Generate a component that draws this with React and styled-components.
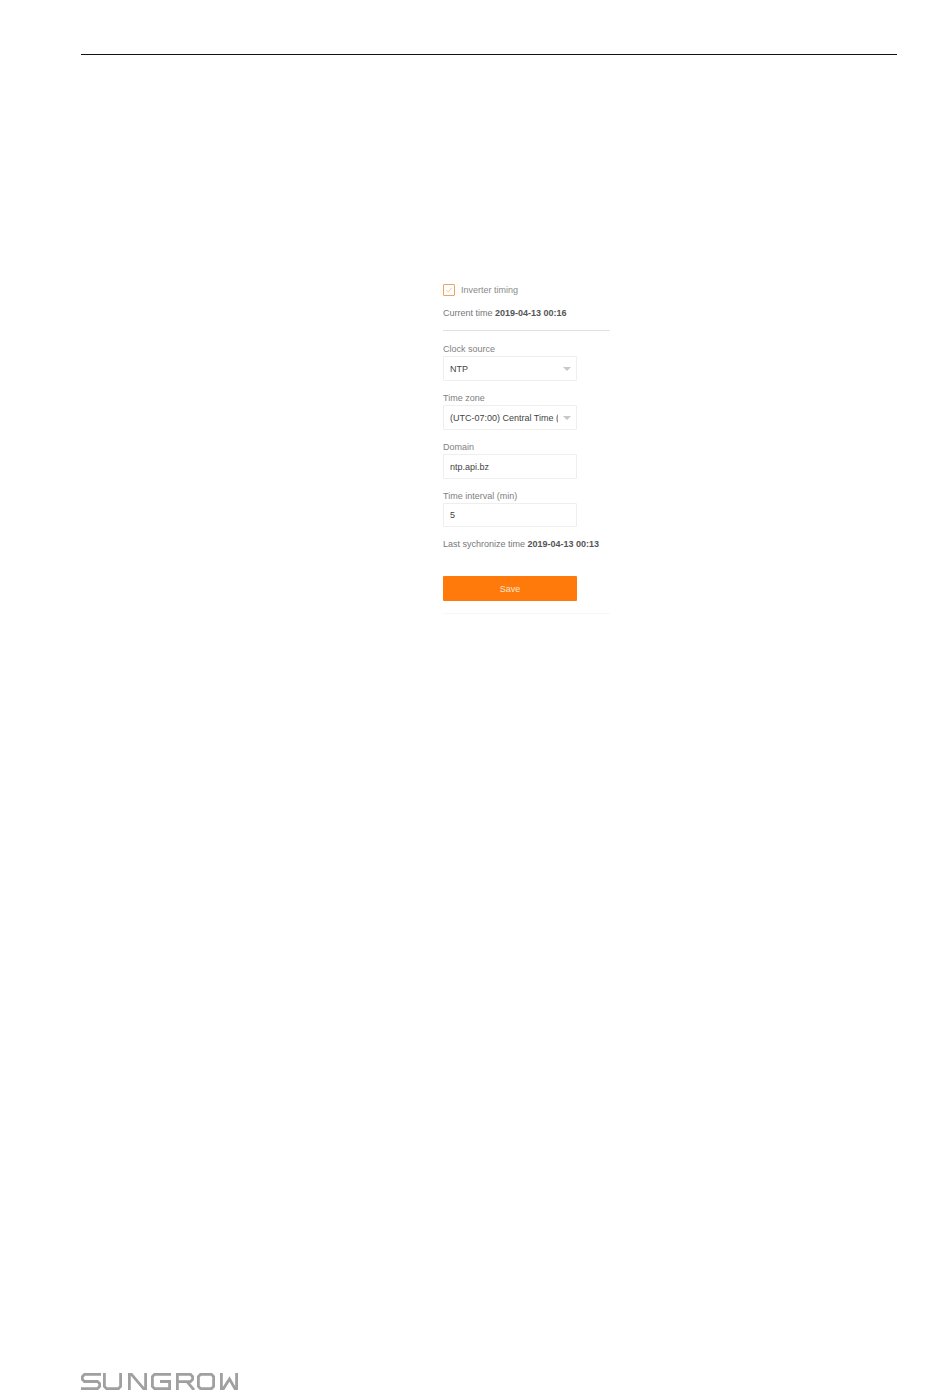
import React from 'react'
import styled, { createGlobalStyle } from 'styled-components'

const GlobalStyle = createGlobalStyle`
  html, body {
    margin: 0;
    padding: 0;
    background: #fff;
  }
`

const Page = styled.div`
  width: 950px;
  height: 1395px;
  box-sizing: border-box;
  padding: 54px 53px 5px 81px;
  display: flex;
  flex-direction: column;
  justify-content: space-between;
  overflow: hidden;
  font-family: "Liberation Sans", Arial, sans-serif;
`

const TopRule = styled.div`
  height: 1px;
  background: #111;
`

const Form = styled.div`
  width: 167px;
  margin: 228px 0 0 362px;
  display: flex;
  flex-direction: column;
  flex: 1;
`

const CheckRow = styled.label`
  display: flex;
  align-items: center;
  gap: 6px;
  height: 14px;
  font-size: 9px;
  color: #8a8a8a;
`

const CheckBox = styled.span`
  width: 10px;
  height: 10px;
  border: 1px solid #f0a35c;
  border-radius: 1px;
  display: flex;
  align-items: center;
  justify-content: center;
`

const InfoLine = styled.div`
  font-size: 9px;
  line-height: 12px;
  color: #777;
  margin-top: ${p => p.$top}px;

  b {
    color: #555;
  }
`

const Divider = styled.div`
  height: 1px;
  background: #e2e2e2;
  margin-top: 11px;
`

const FieldLabel = styled.div`
  font-size: 9px;
  line-height: 11px;
  color: #808080;
  margin-top: ${p => p.$top || 12}px;
`

const Control = styled.div`
  width: 134px;
  height: ${p => p.$height || 25}px;
  box-sizing: border-box;
  margin-top: 1px;
  padding: 0 5px 0 6px;
  border: 1px solid #eeeeee;
  border-radius: 1px;
  display: flex;
  align-items: center;
  justify-content: space-between;
  font-size: 9px;
  color: #444;
  background: #fff;
`

const ControlText = styled.span`
  white-space: nowrap;
  overflow: hidden;
  width: 108px;
`

const Caret = styled.span`
  width: 0;
  height: 0;
  border-left: 4.5px solid transparent;
  border-right: 4.5px solid transparent;
  border-top: 4px solid #c8c8c8;
`

const SaveButton = styled.button`
  width: 134px;
  height: 25px;
  margin-top: 26px;
  padding: 0;
  border: none;
  border-radius: 1px;
  background: #ff7a0a;
  color: #f7e6d2;
  font-family: inherit;
  font-size: 9px;
`

const FormEnd = styled.div`
  height: 1px;
  background: #f7f7f7;
  margin-top: 12px;
`

const Logo = styled.svg`
  display: block;
  width: 157px;
  height: 17px;
  flex-shrink: 0;
`

const Field = ({ label, value, select, top, height }) => (
  <>
    <FieldLabel $top={top}>{label}</FieldLabel>
    <Control $height={height}>
      <ControlText>{value}</ControlText>
      {select && <Caret />}
    </Control>
  </>
)

const App = () => (
  <Page>
    <GlobalStyle />
    <TopRule />
    <Form>
      <CheckRow>
        <CheckBox>
          <svg width="8" height="8" viewBox="0 0 8 8" fill="none">
            <path d="M1.2 4.2 L3.2 6 L6.8 1.8" stroke="#f3c9a3" strokeWidth="1" />
          </svg>
        </CheckBox>
        Inverter timing
      </CheckRow>
      <InfoLine $top={10}>Current time <b>2019-04-13 00:16</b></InfoLine>
      <Divider />
      <Field label="Clock source" value="NTP" select top={13} />
      <Field label="Time zone" value="(UTC-07:00) Central Time (US & Canada)" select />
      <Field label="Domain" value="ntp.api.bz" />
      <Field label="Time interval (min)" value="5" height={24} />
      <InfoLine $top={11}>Last sychronize time <b>2019-04-13 00:13</b></InfoLine>
      <SaveButton>Save</SaveButton>
      <FormEnd />
    </Form>
    <Logo viewBox="0 0 157 17" fill="none" stroke="#a0a0a0" strokeWidth="2.8">
      <path d="M20 1.4H3.5L1.4 3.5V6.5L3.5 8.5H16.5L18.6 10.5V13.5L16.5 15.6H0" />
      <path d="M23.4 0V13.5L25.5 15.6H37.5L39.6 13.5V0" />
      <path d="M48.4 17V1.4H50.5L62.6 15.6H64.6V0" />
      <path d="M90 1.4H73.5L71.4 3.5V13.5L73.5 15.6H88.6V8.5H79" />
      <path d="M96.4 17V1.4H109.5L111.6 3.5V6.5L109.5 8.6H97M106 8.6L113 17" />
      <path d="M119.5 1.4H130.5L132.6 3.5V13.5L130.5 15.6H119.5L117.4 13.5V3.5Z" />
      <path d="M140.4 0V15.6H142.5L148.5 6L154 15.6H155.6V0" />
    </Logo>
  </Page>
)

export default App
